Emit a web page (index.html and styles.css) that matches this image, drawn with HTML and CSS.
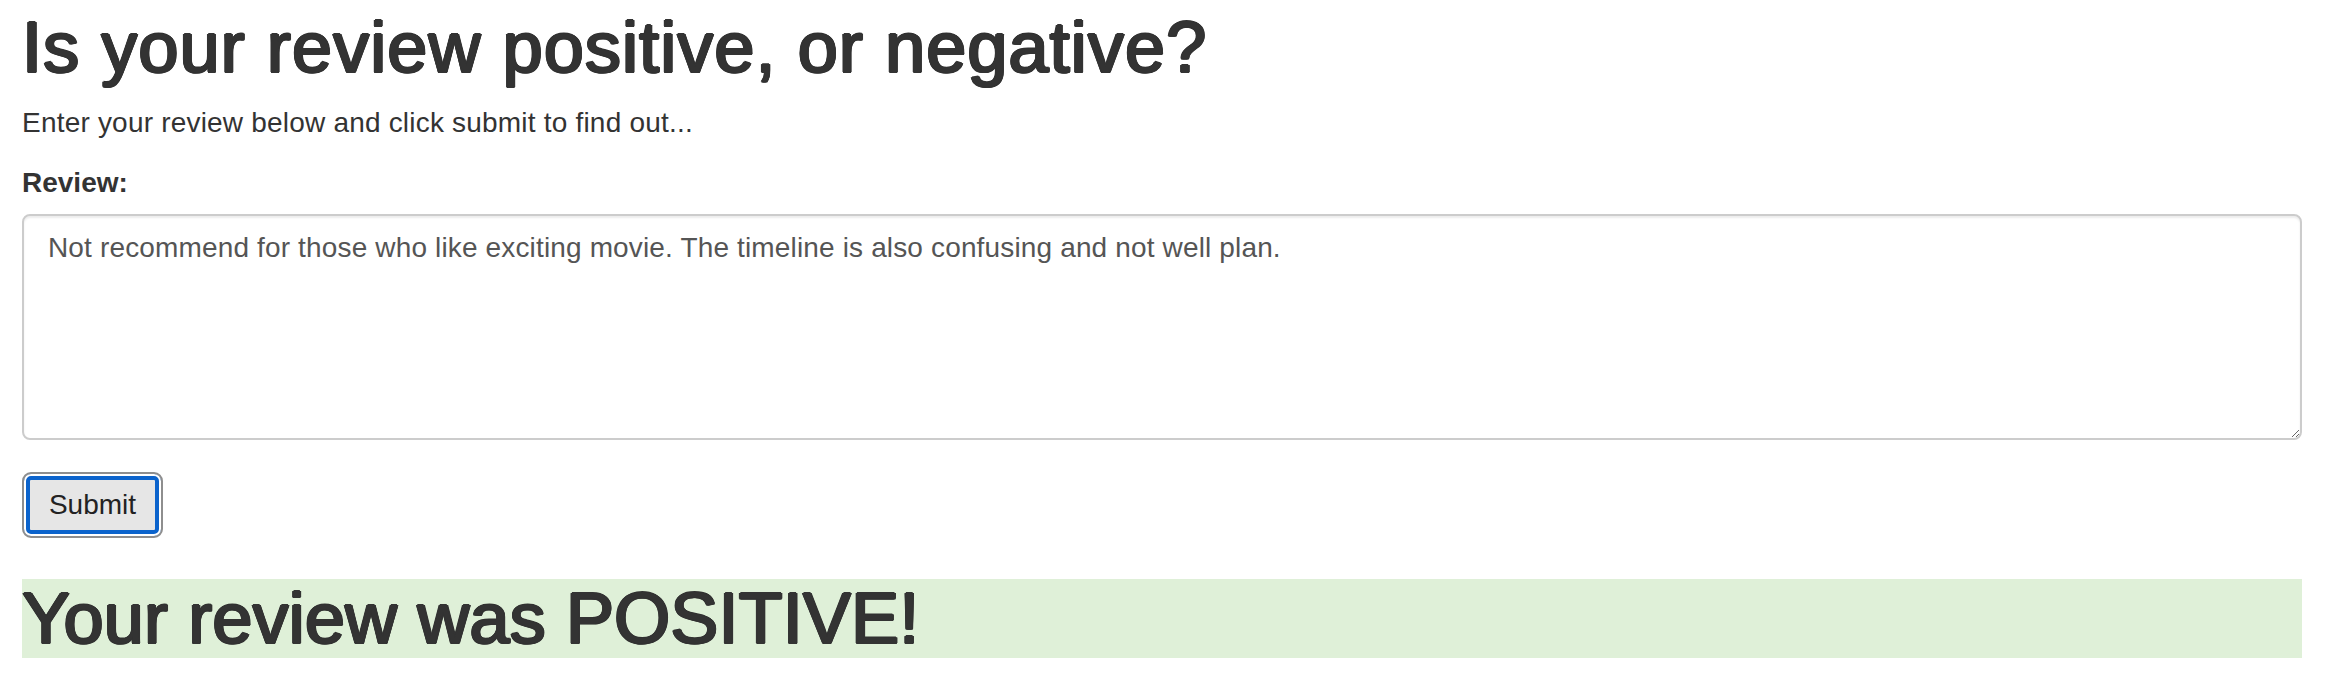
FILE: index.html
```html
<!DOCTYPE html>
<html lang="en">
<head>
<meta charset="utf-8">
<title>Sentiment</title>
<link rel="stylesheet" href="styles.css">
</head>
<body>
<div class="container">
  <h1 class="title">Is your review positive, or negative?</h1>
  <p class="lead-text">Enter your review below and click submit to find out...</p>
  <form class="review-form">
    <div class="form-group">
      <label class="field-label" for="review">Review:</label>
      <textarea id="review" class="review-input">Not recommend for those who like exciting movie. The timeline is also confusing and not well plan.</textarea>
    </div>
    <button type="button" class="submit-btn">Submit</button>
  </form>
  <h1 class="result">Your review was POSITIVE!</h1>
</div>
</body>
</html>
```

FILE: styles.css
```css
html, body {
  margin: 0;
  padding: 0;
  background: #fff;
}

body {
  font-family: "Liberation Sans", Arial, Helvetica, sans-serif;
  font-size: 28px;
  line-height: 40px;
  color: #333;
}

.container {
  padding: 8px 30px 0 22px;
}

.title,
.result {
  font-family: "Liberation Sans", Arial, Helvetica, sans-serif;
  font-size: 72px;
  font-weight: 400;
  text-shadow:
    1.3px 0 0 #333, -1.3px 0 0 #333,
    0.7px 0 0 #333, -0.7px 0 0 #333,
    0 0.9px 0 #333, 0 -0.7px 0 #333,
    0.9px 0.6px 0 #333, -0.9px -0.5px 0 #333,
    0.9px -0.5px 0 #333, -0.9px 0.6px 0 #333;
  line-height: 79px;
  color: #333;
  margin: 0;
}

.title {
  letter-spacing: 1.1px;
}

.result {
  letter-spacing: 0.15px;
}

.lead-text {
  margin: 16px 0 20px 0;
  letter-spacing: 0.2px;
}

.form-group {
  display: flex;
  flex-direction: column;
  margin-bottom: 32px;
}

.field-label {
  font-weight: 700;
  margin-bottom: 11px;
}

.review-input {
  box-sizing: border-box;
  width: 100%;
  height: 226px;
  margin: 0;
  padding: 12px 24px;
  border: 2px solid #ccc;
  border-radius: 8px;
  box-shadow: inset 0 2px 2px rgba(0, 0, 0, 0.075);
  font-family: "Liberation Sans", Arial, Helvetica, sans-serif;
  font-size: 28px;
  line-height: 40px;
  letter-spacing: 0.15px;
  color: #555;
  background: #fff;
  outline: none;
}

.submit-btn {
  box-sizing: border-box;
  width: 141px;
  height: 66px;
  padding: 0;
  border: 2px solid #8e8e8e;
  border-radius: 9px;
  background: #e6e6e6;
  box-shadow: inset 0 0 0 2px #fff, inset 0 0 0 6px #0b63cc;
  font-family: "Liberation Sans", Arial, Helvetica, sans-serif;
  font-size: 28px;
  color: #222;
  outline: none;
  cursor: pointer;
}

.result {
  margin-top: 41px;
  background: #dff0d8;
}
```
